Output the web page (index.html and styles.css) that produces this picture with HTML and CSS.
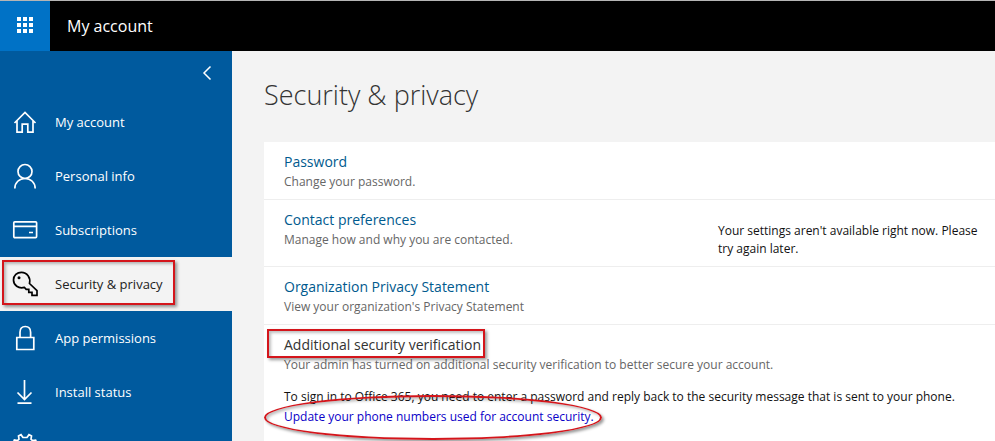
FILE: index.html
```html
<!DOCTYPE html>
<html lang="en">
<head>
<meta charset="utf-8">
<meta name="viewport" content="width=device-width, initial-scale=1">
<title>My account</title>
<link rel="stylesheet" href="styles.css">
</head>
<body>
<header class="topbar">
  <button class="launcher" type="button" aria-label="App launcher">
    <svg width="16" height="16" viewBox="0 0 16 16" fill="currentColor" aria-hidden="true">
      <path d="M0 0h4v4H0zM6 0h4v4H6zM12 0h4v4h-4zM0 6h4v4H0zM6 6h4v4H6zM12 6h4v4h-4zM0 12h4v4H0zM6 12h4v4H6zM12 12h4v4h-4z"/>
    </svg>
  </button>
  <a class="brand" href="#">My account</a>
</header>
<div class="shell">
  <nav class="sidebar" aria-label="Account">
    <button class="collapse" type="button" aria-label="Collapse menu">
      <svg width="10" height="16" viewBox="0 0 10 16" aria-hidden="true"><path d="M8.500 1.500L2 8l6.500 6.500"/></svg>
    </button>
    <a class="item" href="#">
      <svg class="icon" viewBox="0 0 26 26" aria-hidden="true"><path d="M2.500 14L13 3.500 23.500 14M5 12v11.200h5.200v-8h5.600v8H21V12"/></svg>
      <span>My account</span>
    </a>
    <a class="item" href="#">
      <svg class="icon" viewBox="0 0 26 26" aria-hidden="true"><circle cx="13" cy="8.500" r="7"/><path d="M2.800 25.500c0-6 4.500-10 10.200-10s10.200 4 10.200 10"/></svg>
      <span>Personal info</span>
    </a>
    <a class="item" href="#">
      <svg class="icon" viewBox="0 0 26 26" aria-hidden="true"><rect x="1.800" y="4.800" width="22.800" height="15.800" rx="1"/><path d="M2 9.300h22.500M17 15.500h4"/></svg>
      <span>Subscriptions</span>
    </a>
    <a class="item item-current" href="#" aria-current="page">
      <svg class="icon" viewBox="0 0 26 26" aria-hidden="true"><path d="M17.500 12.500L25 19.600v4.700h-5v-3h-3.200v-3h-2.600l-1.800-1.900C6.500 18.200 1.500 14 1.500 9c0-4.500 3.500-7.700 7.900-7.700 5.600 0 9.600 5.400 8.100 11.200z"/><circle class="dot" cx="7" cy="6.800" r="1.500"/></svg>
      <span>Security &amp; privacy</span>
    </a>
    <a class="item" href="#">
      <svg class="icon" viewBox="0 0 26 26" aria-hidden="true"><path d="M4.800 12.500h17v12h-17zM8 12.500V7.200C8 3.500 10.200 1.500 13.300 1.500s5.300 2 5.300 5.700v5.300"/></svg>
      <span>App permissions</span>
    </a>
    <a class="item" href="#">
      <svg class="icon" viewBox="0 0 26 26" aria-hidden="true"><path d="M12.500 1v19.500M5.500 13.500l7 7 7-7M5.500 24.200h14"/></svg>
      <span>Install status</span>
    </a>
    <a class="item" href="#" aria-label="Settings">
      <svg class="icon" viewBox="0 0 26 26" aria-hidden="true"><path d="M11 4.500l-2-2.800-2.500 1.200.5 3.200-1.400 1.400-3.200-.5-1.100 2.600 2.700 1.900v2.900l-2.700 1.900 1.100 2.600 3.200-.5L7 19.900l-.5 3.200L9 24.300l2-2.800h4l2 2.800 2.500-1.200-.5-3.200 1.400-1.400 3.200.5 1.100-2.600-2.700-1.900v-2.900l2.700-1.900-1.100-2.600-3.200.5L19 6.100l.5-3.200L17 1.700l-2 2.800z"/><circle cx="13" cy="13" r="4"/></svg>
    </a>
  </nav>
  <main class="content">
    <h1>Security &amp; privacy</h1>
    <div class="panel">
      <section class="row">
        <h2><a href="#">Password</a></h2>
        <p class="hint">Change your password.</p>
      </section>
      <section class="row row-split">
        <div>
          <h2><a href="#">Contact preferences</a></h2>
          <p class="hint">Manage how and why you are contacted.</p>
        </div>
        <p class="notice">Your settings aren't available right now. Please try again later.</p>
      </section>
      <section class="row">
        <h2><a href="#">Organization Privacy Statement</a></h2>
        <p class="hint">View your organization's Privacy Statement</p>
      </section>
      <section class="row">
        <h2><span class="boxed">Additional security verification</span></h2>
        <p class="hint">Your admin has turned on additional security verification to better secure your account.</p>
        <div class="detail">
          <p>To sign in to Office 365, you need to enter a password and reply back to the security message that is sent to your phone.</p>
          <p><a class="circled" href="#">Update your phone numbers used for account security.</a></p>
        </div>
      </section>
    </div>
  </main>
</div>
</body>
</html>
```
FILE: styles.css
```css
* { box-sizing: border-box; }

body {
  margin: 0;
  height: 100vh;
  overflow: hidden;
  display: flex;
  flex-direction: column;
  background: #f3f3f3;
  color: #111;
  font-family: "Open Sans", "Noto Sans", sans-serif;
  font-size: 12px;
  line-height: 18px;
}

h1, h2, p { margin: 0; font-weight: 400; }
a { text-decoration: none; }
button { border: 0; padding: 0; font: inherit; cursor: pointer; }

.topbar {
  flex: none;
  display: flex;
  height: 51px;
  border-top: 1px solid #b5b5b5;
  background: #000;
}

.launcher {
  display: flex;
  align-items: center;
  justify-content: center;
  width: 50px;
  padding-bottom: 2px;
  background: #0072c6;
  color: #fff;
}

.brand {
  display: flex;
  align-items: center;
  padding-left: 17px;
  color: #fff;
  font-size: 16px;
}

.shell { flex: 1; display: flex; min-height: 0; }

.sidebar {
  flex: none;
  display: flex;
  flex-direction: column;
  width: 232px;
  overflow: hidden;
  background: #005a9e;
}

.collapse {
  flex: none;
  align-self: flex-end;
  display: flex;
  align-items: center;
  justify-content: center;
  width: 50px;
  height: 44px;
  background: none;
}

.collapse path { fill: none; stroke: #fff; stroke-width: 1.500; }

.item {
  flex: none;
  display: flex;
  align-items: center;
  gap: 17px;
  height: 54px;
  padding-left: 12px;
  color: #fff;
  font-size: 13px;
}

.icon {
  width: 26px;
  height: 26px;
  fill: none;
  stroke: currentColor;
  stroke-width: 1.700;
}

.icon .dot { fill: currentColor; stroke: none; }

.item-current {
  position: relative;
  background: #f3f3f3;
  color: #222;
}

.item-current .icon { color: #000; }

.item-current::after,
.boxed::after,
.circled::after {
  content: "";
  position: absolute;
  border: 2px solid #d4151b;
  box-shadow: 2px 2px 3px rgba(0, 0, 0, .4), inset 2px 2px 3px rgba(0, 0, 0, .25);
  pointer-events: none;
}

.item-current::after { inset: 3px 57px 6px 2px; }

.content {
  flex: 1;
  min-width: 0;
  padding: 24px 0 0 32px;
  overflow: hidden;
}

h1 {
  margin-bottom: 27px;
  color: #333;
  font-size: 27px;
  font-weight: 300;
  line-height: 40px;
}

.panel { padding-bottom: 20px; background: #fff; }

.row { padding: 8px 20px; }
.row + .row { border-top: 1px solid #eee; }

.row-split {
  display: grid;
  grid-template-columns: 1fr 273px;
  padding-right: 4px;
}

h2 {
  color: #333;
  font-size: 14px;
  line-height: 23px;
}

h2 a { color: #005a8e; }

.hint { color: #666; }

.notice { padding-top: 14px; }

.detail { padding-top: 13px; line-height: 20px; }

.boxed, .circled { position: relative; display: inline-block; }
.boxed::after { inset: -4px -4px -2px -17px; }
.circled { color: #0a00c8; }
.circled::after { inset: -12px -8px -13px -20px; border-radius: 50%; }
```
